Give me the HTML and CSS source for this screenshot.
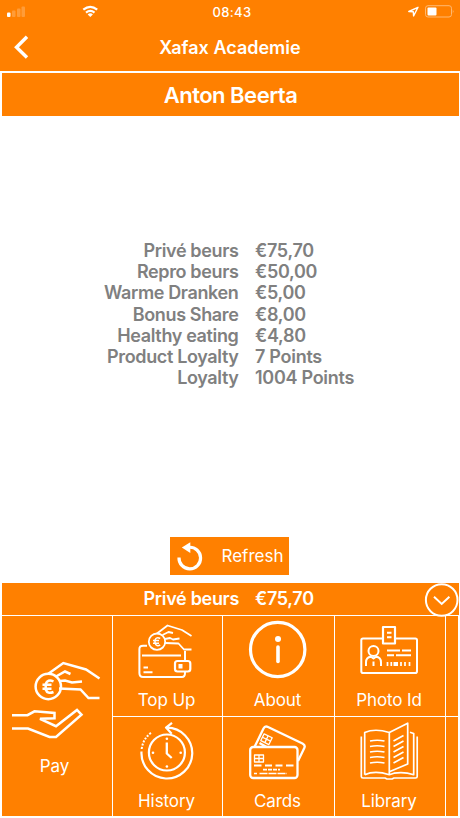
FILE: index.html
```html
<!DOCTYPE html>
<html lang="en">
<head>
<meta charset="utf-8">
<title>Xafax Academie</title>
<link rel="stylesheet" href="styles.css">
</head>
<body>
<div class="app">
  <header class="header">
    <div class="status">
      <svg class="status-left" viewBox="0 0 110 24"><rect x="7" y="12.500" width="3.500" height="4.500" rx="1"/><g opacity=".22"><rect x="12" y="10.500" width="3.500" height="6.500" rx="1"/><rect x="17" y="8.500" width="3.500" height="8.500" rx="1"/><rect x="21.500" y="6.500" width="3.500" height="10.500" rx="1"/></g><path d="M83.300 9.700Q90.300 4 97.200 9.700M86 12.600Q90.300 9.100 94.500 12.600" fill="none" stroke="#fff" stroke-width="2.200"/><path d="M87.700 14.400Q90.300 12.200 92.900 14.400L90.300 17Z"/></svg>
      <span class="time">08:43</span>
      <svg class="status-right" viewBox="400 0 60 24"><path d="M408.800 11.500L418 7.300L413.600 16L413.300 11.800Z" fill="none" stroke="#fff" stroke-width="1.400" stroke-linejoin="round"/><rect x="425.500" y="5.700" width="26" height="11.300" rx="2.500" fill="none" stroke="#ffb870"/><rect x="427.500" y="7.500" width="9" height="8" rx="1"/><path d="M452.800 9.500q1.600 1.900 0 3.800Z" fill="#ffb870"/></svg>
    </div>
    <div class="nav">
      <svg class="back" viewBox="0 24 60 47"><path d="M27 36.800L16.500 47.200L27 57.500" fill="none" stroke="#fff" stroke-width="3.400"/></svg>
      <h1 class="nav-title">Xafax Academie</h1>
    </div>
  </header>
  <h2 class="holder">Anton Beerta</h2>
  <main class="main">
    <dl class="balances">
      <dt>Privé beurs</dt><dd>€75,70</dd>
      <dt>Repro beurs</dt><dd>€50,00</dd>
      <dt>Warme Dranken</dt><dd>€5,00</dd>
      <dt>Bonus Share</dt><dd>€8,00</dd>
      <dt>Healthy eating</dt><dd>€4,80</dd>
      <dt>Product Loyalty</dt><dd>7 Points</dd>
      <dt>Loyalty</dt><dd>1004 Points</dd>
    </dl>
    <button class="refresh">
      <svg class="refresh-icon" viewBox="170.500 537 50 38"><path d="M179.500 557.500A10.800 10.800 0 1 0 189.500 547.300" fill="none" stroke="#fff" stroke-width="3.200"/><path d="M182.300 547.600L190.800 542.200V553Z" fill="#fff"/></svg>
      <span>Refresh</span>
    </button>
  </main>
  <section class="purse">
    <span class="purse-name">Privé beurs</span><span class="purse-amount">€75,70</span>
    <svg class="toggle" viewBox="424 582 35 34"><circle cx="441.700" cy="599" r="15.800"/><path d="M434 595.800L441.700 603L449.400 595.800"/></svg>
  </section>
  <nav class="tiles">
    <a class="tile tile-pay">
      <svg class="icon-pay" viewBox="2 616 110 134"><g stroke-width="2.500"><circle cx="48.300" cy="686.500" r="12.700"/><path d="M48 674L63.300 663L86 669.500L99.500 678.500M56 676.500L65 671.500L70.500 674M60 681L65 680.500L72 682.500L82 681.500M59 688.500L80.500 689.500L88.500 698H99.500M12 715.200H27.500L34.500 711.300L54.500 713V718.300L40 718.800L56 726.200L77 710L81.500 714.700L56 737H49.500L28 728.500H12"/><path d="M53.500 681.300Q47.500 678.800 45.700 684V689.500Q47.500 694.500 53.500 692M42.500 684.800H51.500M42.500 688.700H51.500"/></g></svg>
      <span>Pay</span>
    </a>
    <a class="tile">
      <svg viewBox="113 616 109 68"><g stroke-width="1.800"><path d="M147 645.700H143Q139.400 645.700 139.400 649V673Q139.400 677 143 677H182Q185 677 185 673V672M185 660V651M142 655.500H181M143.500 667.500H148M143.500 672.200H152.500" stroke-width="2"/><rect x="175" y="661" width="15.300" height="10.500" rx="2.500" stroke-width="2.200"/><rect x="178.500" y="664" width="4" height="4.500" fill="#fff" stroke="none"/><circle cx="157" cy="641.700" r="8.200"/><path d="M157 633.500L167.500 625.500L182 630L191.500 636M162.500 635L168.500 632L173 633M165 639L170 638L173 639.500L179.500 638.500M165 643L178.500 643.500L184 649.500H191.500"/><path d="M160.200 638.500Q156.500 636.500 155 640V643.300Q156.500 647 160.200 645M153 640.500H159M153 643.300H159" stroke-width="1.500"/></g></svg>
      <span>Top Up</span>
    </a>
    <a class="tile">
      <svg viewBox="223 616 111 68"><circle cx="277.700" cy="649.500" r="27.200" stroke-width="3.200"/><circle cx="278" cy="639" r="3" fill="#fff" stroke="none"/><path d="M278 647V661.500" stroke-width="3.600" stroke-linecap="round"/></svg>
      <span>About</span>
    </a>
    <a class="tile">
      <svg viewBox="335 616 110 68"><path d="M382 638.500H363Q361.300 638.500 361.300 640.300V671.200Q361.300 673 363 673H415.300Q417 673 417 671.200V640.300Q417 638.500 415.300 638.500H396" stroke-width="2"/><path d="M383 627H395V643.500H383Z" stroke-width="2.200"/><path d="M387 632.700H391.500M387 637.300H391.500" stroke-width="1.900"/><circle cx="373.500" cy="651" r="5" stroke-width="2"/><path d="M366 666V662.500Q366 657 371 656.700L373.500 658.500L376 656.700Q381 657 381 662.500V666" stroke-width="2"/><path d="M373.500 666V661.500" stroke-width="2"/><path d="M387 650.500H400M402 650.500H411M387 655.300H394M396 655.300H411" stroke-width="2"/><path d="M387.500 662V666M391.300 662V666M401 662V666M405 662V666M409.500 662V666" stroke-width="1.700"/><path d="M393.500 664H398" stroke-width="4"/></svg>
      <span>Photo Id</span>
    </a>
    <div class="tile-edge"></div>
    <a class="tile">
      <svg viewBox="113 717 109 68"><circle cx="166.900" cy="752.500" r="18" stroke-width="2.200"/><path d="M141.500 751.500A25.400 25.400 0 1 0 167 727.700M172 722.800L166 727.600L171.700 733.700" stroke-width="2.200"/><path d="M141.700 749Q143 738.500 151.500 732.500" stroke-width="2" stroke-dasharray="2 1.400"/><path d="M166.800 742.500V753.500L171.700 758" stroke-width="2.300"/><g fill="#fff" stroke="none"><circle cx="166.900" cy="738.800" r="1.300"/><circle cx="166.900" cy="766.500" r="1.300"/><circle cx="153" cy="752.700" r="1.300"/><circle cx="180.700" cy="752.700" r="1.300"/></g></svg>
      <span>History</span>
    </a>
    <a class="tile">
      <svg viewBox="223 717 111 68"><rect x="250.200" y="747" width="47.300" height="31" rx="3" stroke-width="2.300"/><path d="M254.500 747L263.500 728.500Q265 725.500 268 727L302.500 743.500Q305.700 745.200 304.300 748L298 761M259.500 743L266.500 747" stroke-width="2.300"/><g stroke-width="1.300"><rect x="254.500" y="755" width="9" height="7"/><path d="M259 755V762M254.500 758.500H263.500"/><g transform="translate(266.500 739.200) rotate(26)"><rect x="-4.500" y="-3.800" width="9" height="7.600"/><path d="M0-3.800V3.800M-4.500 0H4.500"/></g></g><path d="M254 765.500H261.500M265 765.500H272M275.500 765.500H282.500M286 765.500H293.500" stroke-width="1.900"/><path d="M263 769.700H280" stroke-width="1.800" stroke-dasharray="4 1"/><path d="M254 773.500H257M259.500 773.500H287" stroke-width="1.700" stroke-dasharray="8 1"/></svg>
      <span>Cards</span>
    </a>
    <a class="tile">
      <svg viewBox="335 717 110 68"><g stroke-width="1.700"><path d="M364.700 774.700V732.500Q375 728 389.300 732.500V774.700Q375 770 364.700 774.700M389.300 774.700L394 773.200Q404 771.500 413.700 774.700V733.500L410 732.200"/><path d="M389.300 732.500L407.700 723.200V764L389.300 771.800"/><path d="M361.300 736.500V776.500Q361.300 778 363 778H385L387 779H392L394 778H415.500Q417.200 778 417.200 776.500V736.500"/><path d="M370 741Q377 739.500 384.500 741M370 746.500Q377 745 384.500 746.500M370 752Q377 750.500 384.500 752M370 757.500Q377 756 384.500 757.500M370 763Q377 761.500 384.500 763M393.500 741L403.500 735.500M393.500 746.500L403.500 741M393.500 752L403.500 746.500M393.500 757.500L403.500 752M393.500 763L403.500 757.500"/></g></svg>
      <span>Library</span>
    </a>
    <div class="tile-edge"></div>
  </nav>
</div>
</body>
</html>
```
FILE: styles.css
```css
* { box-sizing: border-box; }
body { margin: 0; background: #fff; font-family: Inter, "Liberation Sans", sans-serif; color: #fff; }
.app { width: 460px; height: 818px; display: flex; flex-direction: column; overflow: hidden; }
svg { display: block; flex: none; }

.header { height: 71px; background: #ff8000; }
.status { height: 24px; display: grid; grid-template-columns: 110px 1fr 110px; align-items: center; }
.status svg { height: 24px; fill: #fff; }
.status-left { width: 110px; }
.status-right { width: 60px; justify-self: end; }
.time { text-align: center; font-size: 13px; font-weight: 500; letter-spacing: .4px; padding-left: 4px; }
.nav { height: 47px; display: grid; grid-template-columns: 60px 1fr 60px; align-items: center; }
.back { width: 60px; height: 47px; }
.nav-title { margin: 0; text-align: center; font-size: 18px; font-weight: 600; line-height: 47px; }

.holder { margin: 2px 1px 0 2px; height: 43px; line-height: 45px; background: #ff8000; text-align: center; font-size: 22px; font-weight: 600; letter-spacing: -.5px; }
.main { height: 467px; display: flex; flex-direction: column; align-items: center; justify-content: space-between; padding: 124px 0 8px; }
.balances { width: 100%; margin: 0; display: grid; grid-template-columns: 238.5px 1fr; column-gap: 16.5px; grid-auto-rows: 21.2px; align-items: center; color: #808080; font-size: 18px; font-weight: 600; line-height: 21px; letter-spacing: -.36px; white-space: nowrap; }
.balances dt { text-align: right; }
.balances dd { margin: 0; letter-spacing: -.28px; }
.refresh { width: 119px; height: 38px; margin-right: 1px; padding: 0; border: 0; display: flex; align-items: center; background: #ff8000; color: #fff; font-family: inherit; font-size: 17px; }
.refresh-icon { width: 50px; height: 38px; }
.refresh span { padding-left: 1.5px; }

.purse { height: 32px; margin: 0 1px 0 2px; display: grid; grid-template-columns: 237px 1fr 35px; column-gap: 16px; align-items: center; background: #ff8000; font-size: 18px; font-weight: 600; line-height: 20px; letter-spacing: -.32px; }
.purse-name { text-align: right; }
.purse-name, .purse-amount { padding-bottom: 3px; }
.toggle { width: 35px; height: 34px; fill: none; stroke: #fff; stroke-width: 2; position: relative; }

.tiles { margin: 1px 1px 0 2px; height: 200px; display: grid; grid-template-columns: 110px 109px 111px 110px 12px; grid-template-rows: 100px 99px; gap: 1px; }
.tile, .tile-edge { background: #ff8000; }
.tile { display: flex; flex-direction: column; align-items: center; font-size: 17px; line-height: 32px; letter-spacing: -.1px; overflow: hidden; }
.tile svg { width: 100%; height: 68px; fill: none; stroke: #fff; stroke-linejoin: round; }
.tile span { padding-right: 2px; }
.tile-pay { grid-row: span 2; }
.tile-pay span { padding-right: 5px; }
.tile .icon-pay { height: 134px; stroke-linejoin: miter; }
```
